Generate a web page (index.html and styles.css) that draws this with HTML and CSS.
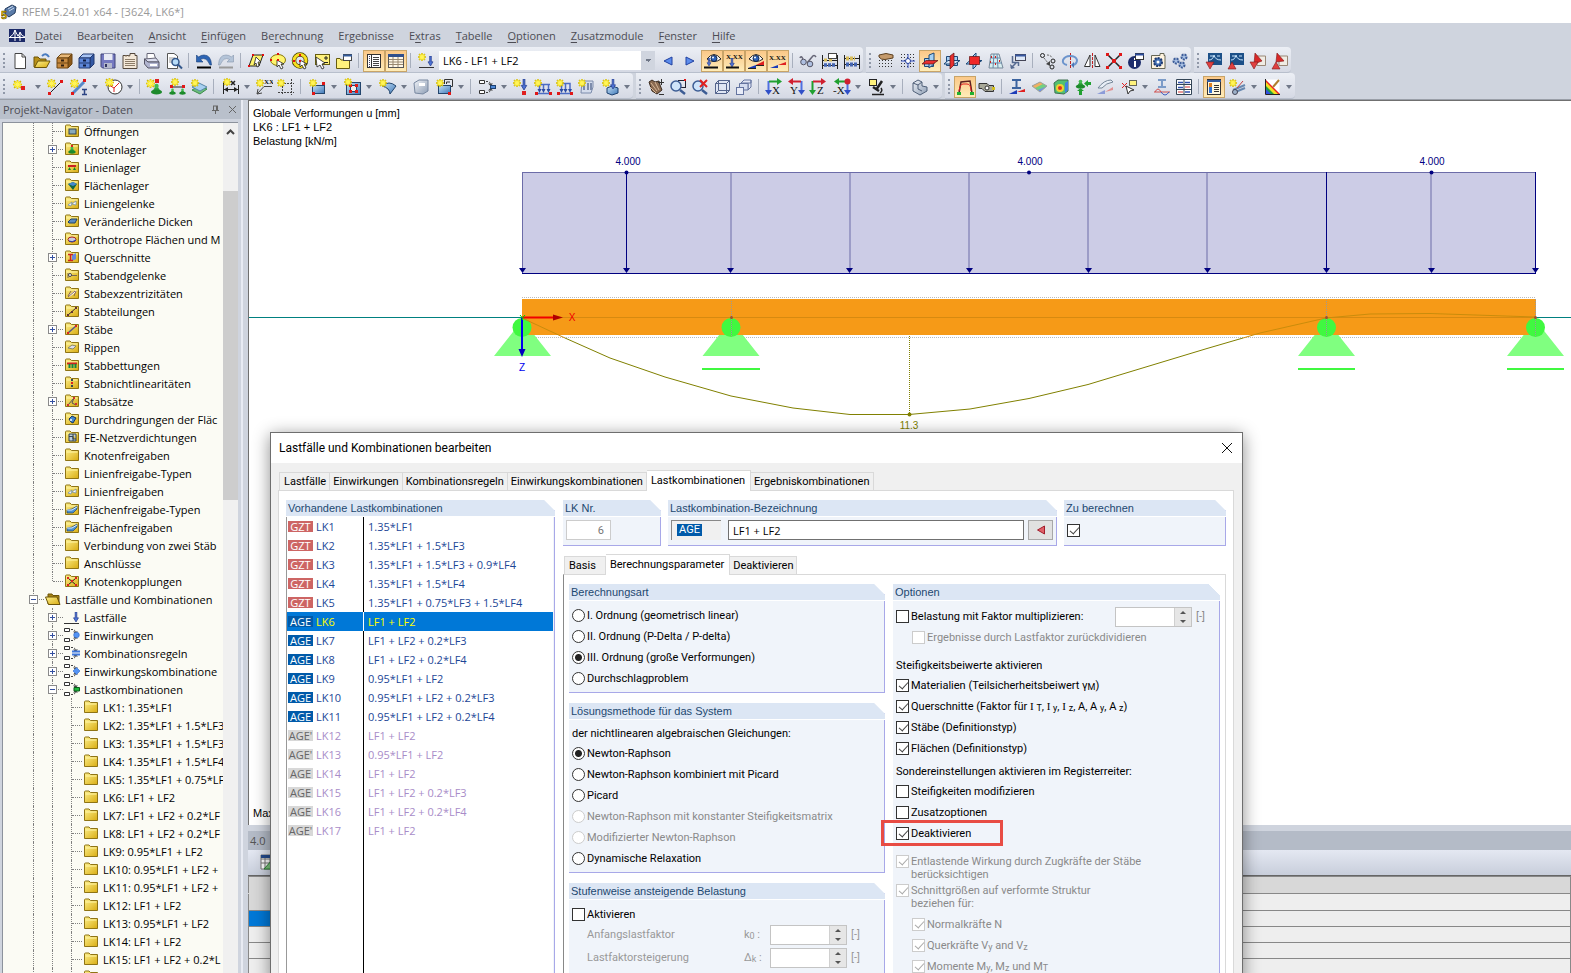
FILE: index.html
```html
<!DOCTYPE html>
<html lang="de">
<head>
<meta charset="utf-8">
<title>RFEM 5.24.01 x64 - [3624, LK6*]</title>
<link rel="stylesheet" href="styles.css">
</head>
<body>
<svg class="defs" aria-hidden="true">
  <defs>
    <linearGradient id="gy" x1="0" y1="0" x2="1" y2="1"><stop offset="0" stop-color="#fdf08c"/><stop offset="1" stop-color="#d9ac12"/></linearGradient>
    <linearGradient id="gb" x1="0" y1="0" x2="1" y2="1"><stop offset="0" stop-color="#c4e0f6"/><stop offset="1" stop-color="#3f78b8"/></linearGradient>
    <linearGradient id="gr" x1="0" y1="0" x2="1" y2="1"><stop offset="0" stop-color="#f0f3f8"/><stop offset="1" stop-color="#8d9db4"/></linearGradient>
  </defs>
  <symbol id="star" viewBox="0 0 8 8"><path d="M4 0V8M0 4H8M1 1L7 7M7 1L1 7" stroke="#c4aa00" stroke-width="1.400"/><path d="M4 .5V7.500M.5 4H7.500M1.500 1.500L6.500 6.500M6.500 1.500L1.500 6.500" stroke="#ffee20" stroke-width="1.200"/><circle cx="4" cy="4" r="2" fill="#fff45c"/></symbol>
  <symbol id="fold" viewBox="0 0 16 14"><path d="M1.500 3V2Q1.500 1 2.500 1H6L7.500 2.500H14.500V12.500H1.500Z" fill="url(#gy)" stroke="#8f7414"/><path d="M2.500 4H13.500" stroke="#fff6a8"/></symbol>
  <symbol id="comb" viewBox="0 0 16 16"><path d="M.5 1.500H5.500V4.500H.5ZM.5 11.500H5.500V14.500H.5Z" fill="#fff" stroke="#333"/><path d="M7 2.500H9Q11 3 11.500 5M7 13.500H9Q11 13 11.500 11" fill="none" stroke="#444" stroke-dasharray="2 1"/><path d="M9 4.500H14L11.500 7ZM9 11.500H14L11.500 9Z" fill="#444"/></symbol>
  <symbol id="dn" viewBox="0 0 6 12"><path d="M2 0H4V7H6L3 12L0 7H2Z" fill="#4d72d4" stroke="#20388c" stroke-width=".8"/></symbol>
  <symbol id="cone" viewBox="0 0 12 12"><path d="M6 2L10 8H2Z" fill="#2fa43c"/><ellipse cx="6" cy="9" rx="5.500" ry="2.500" fill="#1d8a2c"/><circle cx="6" cy="3" r="2.200" fill="#44bb50"/></symbol>
  <symbol id="eye" viewBox="0 0 14 10"><path d="M0 6Q7-3 14 6Q7 11 0 6Z" fill="#fff" stroke="#222"/><circle cx="7" cy="5.500" r="3" fill="#2e62b8" stroke="#14264c"/><circle cx="6" cy="4.500" r="1" fill="#fff"/></symbol>
</svg>

<header class="titlebar">
  <svg class="logo" viewBox="0 0 16 16"><path d="M4 5L11 1L15 3L14 9L8 13L4 10Z" fill="#5a7ba8" stroke="#223a5c"/><path d="M7 5L12 2M8 7L13 4" stroke="#c8d8ee"/><text x="0" y="14.500" class="five">5</text></svg>
  <span>RFEM 5.24.01 x64 - [3624, LK6*]</span>
</header>

<nav class="menubar">
  <svg class="brand" viewBox="0 0 16 13"><rect width="16" height="13" fill="#1c2a68"/><path d="M0 8.500H16M1 8Q5 6 6 1Q7 6 11 8M6 1V12M11 4V12M8 7Q11 6 11 3Q12 7 16 8" fill="none" stroke="#fff"/></svg>
  <button><u>D</u>atei</button><button>Bearbeite<u>n</u></button><button><u>A</u>nsicht</button><button><u>E</u>infügen</button><button>Be<u>r</u>echnung</button><button>Er<u>g</u>ebnisse</button><button>E<u>x</u>tras</button><button><u>T</u>abelle</button><button><u>O</u>ptionen</button><button><u>Z</u>usatzmodule</button><button><u>F</u>enster</button><button><u>H</u>ilfe</button>
</nav>

<div class="bars">
  <div class="bar">
    <button class="b" aria-label="Neu"><svg class="i" viewBox="0 0 18 18"><path d="M4 1.500H11L14.500 5V16.500H4Z" fill="#fff" stroke="#444"/><path d="M11 1.500V5H14.500" stroke="#444"/></svg></button>
    <button class="b" aria-label="Öffnen"><svg class="i" viewBox="0 0 18 18"><path d="M1 15V5H5L7 7H13V15Z" fill="#b89018" stroke="#6c5408"/><path d="M1.500 15.500L5 9H17L13.500 15.500Z" fill="url(#gy)" stroke="#6c5408"/><path d="M9 4Q13 0 16 5" stroke="#4a7cc0" stroke-width="2"/></svg></button>
    <button class="b" aria-label="Block laden"><svg class="i" viewBox="0 0 18 18"><path d="M2 6L6 2H17L13 6Z" fill="#e8b878" stroke="#6c4410"/><path d="M13 6L17 2V12L13 16Z" fill="#8c5818" stroke="#6c4410"/><path d="M2 6H13V16H2ZM2 11H13" fill="#c88a40" stroke="#6c4410"/><path d="M6 8.500H9M6 13.500H9" stroke="#302010" stroke-width="2"/></svg></button>
    <button class="b" aria-label="Block speichern"><svg class="i" viewBox="0 0 18 18"><path d="M2 6L6 2H17L13 6Z" fill="#a8c4f4" stroke="#203870"/><path d="M13 6L17 2V12L13 16Z" fill="#3458a4" stroke="#203870"/><path d="M2 6H13V16H2ZM2 11H13" fill="#5c86d8" stroke="#203870"/><path d="M6 8.500H9M6 13.500H9" stroke="#101c40" stroke-width="2"/></svg></button>
    <button class="b" aria-label="Speichern"><svg class="i" viewBox="0 0 18 18"><path d="M2 2H16V16H3.500L2 14.500Z" fill="#7478c0" stroke="#404478"/><rect x="5" y="2" width="8.500" height="6" fill="#e8eaf4"/><rect x="5" y="11" width="8" height="5" fill="#b4b8cc"/><path d="M7 12V15" stroke="#303460" stroke-width="2"/></svg></button>
    <button class="b" aria-label="Protokoll"><svg class="i" viewBox="0 0 18 18"><path d="M2 3.500H9V1.500H14V3.500H16V16.500H2Z" fill="#f4e8d8" stroke="#54483c"/><path d="M4 7.500H14M4 9.500H14M4 11.500H14M4 13.500H14M5 3V5M8 3V5" stroke="#8c7c68"/></svg></button>
    <button class="b" aria-label="Drucken"><svg class="i" viewBox="0 0 18 18"><path d="M4 8V1.500H11L13 8Z" fill="#fff" stroke="#667"/><path d="M1.500 7L5 10H16L13 6Z" fill="#dcdff0" stroke="#667"/><path d="M1.500 7V12L5 16H16V10H5Z" fill="#b0b4d0" stroke="#556"/><path d="M7 13H14" stroke="#fff" stroke-width="2"/></svg></button>
    <button class="b" aria-label="Vorschau"><svg class="i" viewBox="0 0 18 18"><path d="M2.500 1.500H9L12.500 4V16.500H2.500Z" fill="#fff" stroke="#555"/><path d="M4 6H10M4 8H8M4 10H7" stroke="#999"/><circle cx="10.500" cy="10" r="3.500" fill="#b8dcf8" stroke="#34588c" stroke-width="1.500"/><path d="M13 12.500L17 16.500" stroke="#34588c" stroke-width="2"/></svg></button>
    <i class="sep"></i>
    <button class="b" aria-label="Rückgängig"><svg class="i" viewBox="0 0 18 18"><path d="M1.500 3V10H8L5.500 7.500Q11 4 15 13H16.500Q16 3 9 3Q6 3 3.500 5Z" fill="#2c64b4" stroke="#143c78" stroke-width=".6"/><path d="M2 15.500H16" stroke="#000" stroke-width="2"/></svg></button>
    <button class="b" aria-label="Wiederherstellen"><svg class="i" viewBox="0 0 18 18"><path d="M16.500 3V10H10L12.500 7.500Q7 4 3 13H1.500Q2 3 9 3Q12 3 14.500 5Z" fill="#b4c4d8" stroke="#8496ac" stroke-width=".6"/><path d="M2 15.500H16" stroke="#999" stroke-width="2"/></svg></button>
    <i class="sep"></i>
    <button class="b" aria-label="Auswahl Rhomboid"><svg class="i" viewBox="0 0 18 18"><path d="M6 3H16L12 14H2Z" fill="#fff46c" stroke="#222"/><path d="M9 5L14 10H11L12 14L10 15L9 11L7 13Z" fill="#fff" stroke="#222" stroke-width=".8"/><path d="M5 2h2v2h-2zM15 2h2v2h-2zM1 13h2v2h-2z" fill="#e01010"/></svg></button>
    <button class="b" aria-label="Auswahl Ellipse"><svg class="i" viewBox="0 0 18 18"><ellipse cx="9" cy="8" rx="7.500" ry="5.500" fill="#fff46c" stroke="#88780c"/><path d="M8 8L8 15L10 13L12 17L14 16L12 12H15Z" fill="#fff" stroke="#222" stroke-width=".8"/><path d="M8 1h2v2h-2zM1 7h2v2h-2zM8 7h2v2h-2z" fill="#e01010"/></svg></button>
    <button class="b" aria-label="Auswahl Kreisring"><svg class="i" viewBox="0 0 18 18"><circle cx="9" cy="8.500" r="6" stroke="#443c00" stroke-width="4.500"/><circle cx="9" cy="8.500" r="6" stroke="#f8e020" stroke-width="3"/><path d="M9 8L9 15L11 13L13 17L15 16L13 12H16Z" fill="#fff" stroke="#222" stroke-width=".8"/><path d="M8 2h2v2h-2zM2 8h2v2h-2zM8 8h2v2h-2z" fill="#e01010"/></svg></button>
    <button class="b" aria-label="Auswahl Rechteck"><svg class="i" viewBox="0 0 18 18"><rect x="2.500" y="2.500" width="14" height="10" fill="#fff27c" stroke="#665c10"/><path d="M3 5L4 15L7 13L9 17L11 16L9 12L12 11Z" fill="#fff" stroke="#222" stroke-width=".8"/><path d="M13 4V8M11 6H15M11 10.500H15" stroke="#222"/></svg></button>
    <button class="b" aria-label="Fenster"><svg class="i" viewBox="0 0 18 18"><path d="M1.500 6.500H5L6 8H14.500V16.500H1.500Z" fill="#fff27c" stroke="#665c10"/><rect x="8.500" y="2.500" width="8" height="6" fill="#fff" stroke="#444"/><path d="M8 3.500H17" stroke="#345c9c" stroke-width="2"/></svg></button>
    <i class="sep"></i>
    <button class="b on" aria-label="Navigator"><svg class="i" viewBox="0 0 18 18"><rect x="2.500" y="2.500" width="13" height="13" fill="#fff" stroke="#333"/><path d="M6.500 2V16" stroke="#333"/><path d="M4.500 4V15" stroke="#446" stroke-dasharray="1 1"/><path d="M8 5.500H14M8 7.500H14M8 9.500H14M8 11.500H14M8 13.500H14" stroke="#444"/></svg></button>
    <button class="b on" aria-label="Tabellen"><svg class="i" viewBox="0 0 18 18"><rect x="1.500" y="2.500" width="15" height="13" fill="#fff8e8" stroke="#555"/><path d="M1 3.500H17" stroke="#30508c" stroke-width="3"/><path d="M2 7.500H16M2 10H16M2 12.500H16M6 5V15M11 5V15" stroke="#998870"/></svg></button>
    <i class="sep"></i>
    <button class="b" aria-label="Neue Last"><svg class="i" viewBox="0 0 18 18"><use href="#star" x="1" y="1" width="8" height="8"/><use href="#dn" x="10" y="4" width="7" height="10"/><path d="M2 15.500H17" stroke="#333"/></svg></button>
    <select class="lk" aria-label="Lastkombination"><option>LK6 - LF1 + LF2</option></select>
    <button class="b" aria-label="Vorige"><svg class="i" viewBox="0 0 18 18"><path d="M13 5V13L5 9Z" fill="#5c8cec" stroke="#2040a0"/></svg></button>
    <button class="b" aria-label="Nächste"><svg class="i" viewBox="0 0 18 18"><path d="M5 5V13L13 9Z" fill="#5c8cec" stroke="#2040a0"/></svg></button>
    <button class="b on" aria-label="Lasten zeigen"><svg class="i" viewBox="0 0 18 18"><use href="#eye" x="4" y="1" width="14" height="10"/><use href="#dn" x="3" y="6" width="6" height="8"/><path d="M1 15.500H15" stroke="#111" stroke-width="2"/></svg></button>
    <button class="b on" aria-label="Lastwerte"><svg class="i" viewBox="0 0 18 18"><text x="1" y="7" class="xt">X.XX</text><use href="#dn" x="4" y="6" width="6" height="9"/><path d="M1 15.500H14" stroke="#111" stroke-width="2"/></svg></button>
    <button class="b on" aria-label="Ergebnisse zeigen"><svg class="i" viewBox="0 0 18 18"><use href="#eye" x="2" y="1" width="14" height="10"/><path d="M1 16L9 13V16Z" fill="#1c3cb8"/><path d="M9 13L17 9V13Z" fill="#e02020"/><path d="M1 16.500H9M9 13.500H17" stroke="#222"/></svg></button>
    <button class="b on" aria-label="Ergebniswerte"><svg class="i" viewBox="0 0 18 18"><text x="0" y="8" class="xt">X.XX</text><path d="M1 16L9 13V16Z" fill="#1c3cb8"/><path d="M9 13L17 10V13Z" fill="#e02020"/></svg></button>
    <i class="sep"></i>
    <button class="b" aria-label="Sicht"><svg class="i" viewBox="0 0 18 18"><path d="M1 6Q2 3 4 7M8 11L13 5Q15 2 17 5" stroke="#667" stroke-width="1.500"/><circle cx="4.500" cy="10" r="2.800" fill="#aebfe0" stroke="#556"/><circle cx="11" cy="12" r="2.800" fill="#aebfe0" stroke="#556"/></svg></button>
    <button class="b" aria-label="Berechnung LK"><svg class="i" viewBox="0 0 18 18"><path d="M1.500 3V17M16.500 3V17M1 8.500H17M1 13.500H17" stroke="#222"/><path d="M3 8h4M8 8h4" stroke="#d8bc58" stroke-width="3" stroke-dasharray="3 1"/><path d="M3 13H15" stroke="#4464b0" stroke-width="3.500" stroke-dasharray="3 1"/><rect x="7.500" y="1.500" width="8" height="5" fill="#fff" stroke="#444"/></svg></button>
    <button class="b" aria-label="Alles berechnen"><svg class="i" viewBox="0 0 18 18"><path d="M1.500 3V17M16.500 3V17M1 6.500H17M1 12.500H17" stroke="#222"/><path d="M3 6.500H12" stroke="#d8bc58" stroke-width="4" stroke-dasharray="3 1"/><path d="M3 12.500H15" stroke="#4464b0" stroke-width="4" stroke-dasharray="3 1"/></svg></button>
  </div>
  <div class="bar">
    <button class="b" aria-label="Raster setzen"><svg class="i" viewBox="0 0 18 18"><path d="M2 8.500H17M2 11.500H17M2 14.500H17" stroke="#333" stroke-dasharray="1 2"/><path d="M2 3L9 1.500L16 3V6L8 7.500Q4 8 2 5Z" fill="#c49a6c" stroke="#5c4020"/></svg></button>
    <button class="b" aria-label="Raster"><svg class="i" viewBox="0 0 18 18"><path d="M2 2.500H17M2 5.500H17M2 14.500H17M2 8.500H17M2 11.500H17" stroke="#333" stroke-dasharray="1 2"/><path d="M9 2V16M2 9H16" stroke="#3450c0"/><circle cx="9" cy="9" r="2.500" fill="#fff" stroke="#2440a0"/></svg></button>
    <button class="b on" aria-label="Ebene XY"><svg class="i" viewBox="0 0 18 18"><path d="M3.500 6.500H12.500V14.500H3.500Z" fill="#a4d0f4" stroke="#1c4878"/><path d="M8 3L13 1V12L8 16Z" fill="#a4d0f4" stroke="#1c4878"/><path d="M1 12L5 8.500H17L12 12Z" fill="#e83030" stroke="#601010" stroke-width=".7"/></svg></button>
    <button class="b" aria-label="Ebene YZ"><svg class="i" viewBox="0 0 18 18"><path d="M3.500 4.500H14.500V13.500H3.500Z" fill="#a4d0f4" stroke="#1c4878"/><path d="M1 12L5 8.500H17L12 12Z" fill="#d4e8fa" stroke="#1c4878"/><path d="M7 4L11 1V13L7 17Z" fill="#e83030" stroke="#601010" stroke-width=".7"/></svg></button>
    <button class="b" aria-label="Ebene XZ"><svg class="i" viewBox="0 0 18 18"><path d="M1 12L5 8.500H17L12 12Z" fill="#a4d0f4" stroke="#1c4878"/><path d="M8 4L11 1V14L8 17Z" fill="#a4d0f4" stroke="#1c4878"/><path d="M4.500 4.500H14.500V12.500H4.500Z" fill="#f02828" stroke="#601010" stroke-width=".7"/></svg></button>
    <button class="b" aria-label="Netz"><svg class="i" viewBox="0 0 18 18"><path d="M4 2H12L16 16H2Z" fill="#d8eef0" stroke="#789"/><path d="M4 6H13M3 11H15M7 2L6 16M10 2L11 16" stroke="#68a"/><path d="M4 5h1M8 5h1M12 9h1M3 10h1M8 12h1" stroke="#d02020" stroke-width="2"/></svg></button>
    <button class="b" aria-label="Schnitt"><svg class="i" viewBox="0 0 18 18"><rect x="6.500" y="2.500" width="10" height="6" fill="#dde8f8" stroke="#445"/><path d="M6 3.500H17" stroke="#3858a0" stroke-width="2"/><path d="M3.500 4V10.500H9.500V14M2 16L7 11" stroke="#566a90" stroke-width="1.500"/><path d="M1 12L2 17L6 16Z" fill="#566a90"/></svg></button>
    <i class="sep"></i>
    <button class="b" aria-label="Kopieren"><svg class="i" viewBox="0 0 18 18"><circle cx="3.500" cy="3.500" r="2" stroke="#222"/><circle cx="14" cy="9" r="2" stroke="#222"/><circle cx="13" cy="15" r="2" stroke="#222"/><path d="M5 6L9 11M8 3Q12 3 13 6" stroke="#666" stroke-dasharray="2 1"/><path d="M11 14L7 12L11 9Z" fill="#444"/></svg></button>
    <button class="b" aria-label="Drehen"><svg class="i" viewBox="0 0 18 18"><path d="M9.500 1V17" stroke="#c02020" stroke-dasharray="3 1"/><path d="M6 13Q1 12 2 8Q4 4 9 4Q15 4 16 8Q16 12 12 13" stroke="#6c94cc" stroke-width="2"/><path d="M10 13L13 10V16Z" fill="#4c78b8"/></svg></button>
    <button class="b" aria-label="Spiegeln"><svg class="i" viewBox="0 0 18 18"><path d="M9.500 1V17" stroke="#c02020" stroke-dasharray="3 1"/><path d="M7 3V14.500H1.500Z" fill="#fff" stroke="#333"/><path d="M12 3V14.500H17Z" fill="#fff" stroke="#333"/></svg></button>
    <button class="b" aria-label="Trennen"><svg class="i" viewBox="0 0 18 18"><path d="M2 2L16 16M16 2L2 16" stroke="#222" stroke-width="1.500"/><path d="M1 1h3v3h-3zM14 1h3v3h-3zM1 14h3v3h-3zM14 14h3v3h-3zM7 7h4v4h-4z" fill="#e01818"/></svg></button>
    <button class="b" aria-label="Info"><svg class="i" viewBox="0 0 18 18"><circle cx="7.500" cy="10.500" r="6.500" fill="#1c2c6c"/><path d="M8 9V15M8 6V8" stroke="#fff" stroke-width="2"/><rect x="8.500" y="1.500" width="8" height="6" fill="#fff" stroke="#333"/><path d="M8 2.500H17" stroke="#2c4c9c" stroke-width="2"/></svg></button>
    <button class="b" aria-label="Einstellungen"><svg class="i" viewBox="0 0 18 18"><path d="M2.500 3.500H11V1.500H15V3.500H16V16.500H2.500Z" fill="#fff4e0" stroke="#665"/><circle cx="9" cy="10" r="4" fill="#4470b4" stroke="#1c3870" stroke-dasharray="2 1" stroke-width="2"/><circle cx="9" cy="10" r="1.500" fill="#fff"/></svg></button>
    <button class="b" aria-label="Optionen"><svg class="i" viewBox="0 0 18 18"><g stroke="#3c5c98" stroke-width="2" stroke-dasharray="2 1" fill="#a8c0e4"><circle cx="5" cy="9" r="2.500"/><circle cx="13" cy="5" r="2.500"/><circle cx="11" cy="13" r="2.500"/></g></svg></button>
  </div>
  <div class="bar">
    <button class="b" aria-label="Import"><svg class="i" viewBox="0 0 18 18"><rect x="3" y="1" width="14" height="12" fill="#1c5088"/><path d="M4 8Q8 8 9 3Q10 8 16 8M5 4h3M12 4h3" stroke="#c8e4fc"/><path d="M1 10H9L5 17Z" fill="#e04040" stroke="#801818" stroke-width=".6"/></svg></button>
    <button class="b" aria-label="Export"><svg class="i" viewBox="0 0 18 18"><rect x="3" y="1" width="14" height="12" fill="#1c5088"/><path d="M4 8Q8 8 9 3Q10 8 16 8M5 4h3M12 4h3" stroke="#c8e4fc"/><path d="M1 17H9L5 10Z" fill="#e04040" stroke="#801818" stroke-width=".6"/></svg></button>
    <button class="b" aria-label="PDF Import"><svg class="i" viewBox="0 0 18 18"><path d="M8 4H16.500V13.500H8Z" fill="#f0ece4" stroke="#987"/><path d="M6 1L13 9L5 12Z" fill="#d82828" stroke="#801818" stroke-width=".6"/><path d="M1 10H9L5 17Z" fill="#e04040" stroke="#801818" stroke-width=".6"/></svg></button>
    <button class="b" aria-label="PDF Export"><svg class="i" viewBox="0 0 18 18"><path d="M8 4H16.500V13.500H8Z" fill="#f0ece4" stroke="#987"/><path d="M6 1L13 9L5 10Z" fill="#d82828" stroke="#801818" stroke-width=".6"/><path d="M1 17H9L5 10Z" fill="#e04040" stroke="#801818" stroke-width=".6"/></svg></button>
  </div>
</div>

<div class="bars">
  <div class="bar">
    <button class="b s" aria-label="Knoten"><svg class="i" viewBox="0 0 18 18"><use href="#star" x="0" y="2" width="9" height="9"/><rect x="8" y="8" width="4" height="4" fill="#e02020"/></svg></button>
    <button class="b" aria-label="Linie"><svg class="i" viewBox="0 0 18 18"><path d="M4 15L15 4" stroke="#222"/><path d="M2 14h3v3h-3zM14 2h3v3h-3z" fill="#e01818"/><use href="#star" x="1" y="1" width="9" height="9"/></svg></button>
    <button class="b s" aria-label="Stab"><svg class="i" viewBox="0 0 18 18"><path d="M3 15L14 4" stroke="#5888c8" stroke-width="3"/><path d="M1 14h3v3h-3zM13 1h3v3h-3z" fill="#e01818"/><use href="#star" x="0" y="1" width="9" height="9"/><path d="M12 11.500H17M14.500 11V17M12 16.500H17" stroke="#2c4484" stroke-width="1.500"/></svg></button>
    <button class="b s" aria-label="Bogen"><svg class="i" viewBox="0 0 18 18"><circle cx="10" cy="9" r="7" fill="#fff" stroke="#333"/><path d="M4 7L9 10L14 5M9 10V14" stroke="#e02020"/><use href="#star" x="0" y="0" width="9" height="9"/></svg></button>
    <i class="sep"></i>
    <button class="b" aria-label="Knotenlager"><svg class="i" viewBox="0 0 18 18"><use href="#cone" x="4" y="5" width="13" height="12"/><rect x="9" y="1" width="4" height="4" fill="#e02020"/><use href="#star" x="0" y="1" width="9" height="9"/></svg></button>
    <button class="b" aria-label="Linienlager"><svg class="i" viewBox="0 0 18 18"><path d="M3 9H16" stroke="#222"/><path d="M2 7h3v3h-3zM14 7h3v3h-3z" fill="#e01818"/><use href="#cone" x="1" y="10" width="7" height="7"/><use href="#cone" x="11" y="10" width="7" height="7"/><use href="#star" x="3" y="0" width="8" height="8"/></svg></button>
    <button class="b" aria-label="Flächenlager"><svg class="i" viewBox="0 0 18 18"><path d="M2 12L9 8L17 11L10 16Z" fill="#6cbc7c" stroke="#3c8c4c"/><path d="M2 9L9 5L17 9L10 13Z" fill="#a8d0f0" stroke="#5888a8"/><use href="#star" x="1" y="1" width="8" height="8"/></svg></button>
    <i class="sep"></i>
    <button class="b s" aria-label="Bemaßung"><svg class="i" viewBox="0 0 18 18"><path d="M1.500 4V16M16.500 7V16M2 11.500H16" stroke="#222"/><path d="M2 11.500L6 9V14ZM16 11.500L12 9V14Z" fill="#222"/><use href="#star" x="1" y="0" width="8" height="8"/><path d="M9 3L13 7M13 3L9 7" stroke="#222" stroke-width="1.500"/></svg></button>
    <button class="b" aria-label="Kommentar"><svg class="i" viewBox="0 0 18 18"><path d="M2 16L9 8.500H17M2 16L3 11M2 16L7 15" stroke="#444"/><use href="#star" x="1" y="1" width="8" height="8"/><text x="9" y="6" class="xt">XX</text></svg></button>
    <button class="b" aria-label="Hilfslinien"><svg class="i" viewBox="0 0 18 18"><path d="M5.500 5V17M14.500 1V17M1 5.500H17M1 14.500H17" stroke="#444" stroke-dasharray="2 1"/><use href="#star" x="0" y="1" width="8" height="8"/></svg></button>
    <i class="sep"></i>
    <button class="b s" aria-label="Fläche"><svg class="i" viewBox="0 0 18 18"><rect x="3.500" y="7.500" width="12" height="8" fill="url(#gb)" stroke="#23456c"/><path d="M13 4h3v3h-3zM3 14h3v3h-3z" fill="#e01818"/><use href="#star" x="0" y="1" width="8" height="8"/></svg></button>
    <button class="b s" aria-label="Öffnung"><svg class="i" viewBox="0 0 18 18"><rect x="2.500" y="4.500" width="14" height="12" fill="url(#gb)" stroke="#23456c"/><rect x="6.500" y="7.500" width="6" height="6" fill="#eee" stroke="#23456c"/><path d="M5 6h3v3h-3zM11 6h3v3h-3zM5 12h3v3h-3zM11 12h3v3h-3z" fill="#e01818"/><use href="#star" x="0" y="0" width="8" height="8"/></svg></button>
    <button class="b s" aria-label="Gekrümmte Fläche"><svg class="i" viewBox="0 0 18 18"><path d="M3 8Q10 2 17 8L11 16Q11 10 3 8Z" fill="url(#gb)" stroke="#23456c"/><use href="#star" x="0" y="1" width="8" height="8"/></svg></button>
    <button class="b" aria-label="Volumen"><svg class="i" viewBox="0 0 18 18"><path d="M2 5L7 2H16V13L11 16L3 15Z" fill="url(#gr)" stroke="#7888a0"/><path d="M7 5H13V8H7Z" fill="#fff"/></svg></button>
    <button class="b s" aria-label="Quader"><svg class="i" viewBox="0 0 18 18"><path d="M8.500 6V1.500H16.500V8.500H14M10.500 6V4H14" stroke="#333"/><rect x="2.500" y="7.500" width="12" height="8" fill="url(#gb)" stroke="#23456c"/><path d="M12 14h3v3h-3z" fill="#e01818"/><use href="#star" x="0" y="1" width="8" height="8"/></svg></button>
    <i class="sep"></i>
    <button class="b s" aria-label="Kombination"><svg class="i" viewBox="0 0 18 18"><use href="#comb" x="0" y="1" width="16" height="16"/><rect x="11.500" y="7.500" width="5" height="3" fill="#4c88d8" stroke="#1c4070"/></svg></button>
    <button class="b" aria-label="Knotenlast"><svg class="i" viewBox="0 0 18 18"><use href="#dn" x="8" y="1" width="8" height="11"/><rect x="10" y="13" width="4" height="4" fill="#e02020"/><use href="#star" x="1" y="1" width="8" height="8"/></svg></button>
    <button class="b" aria-label="Stablast"><svg class="i" viewBox="0 0 18 18"><path d="M4 6.500H16M5.500 6V13M9.500 6V13M14.500 6V13M2 15.500H17" stroke="#4c6cc4" stroke-width="1.500"/><path d="M3.500 11h4L5.500 15zM7.500 11h4L9.500 15zM12.500 11h4L14.500 15z" fill="#2c4ca4"/><path d="M1 14h3v3h-3zM15 14h3v3h-3z" fill="#e01818"/><use href="#star" x="0" y="1" width="8" height="8"/></svg></button>
    <button class="b" aria-label="Linienlast"><svg class="i" viewBox="0 0 18 18"><path d="M5 5.500H14V13M5.500 6V13M9.500 6V13M2 15.500H17" stroke="#4c6cc4" stroke-width="1.500"/><path d="M3.500 11h4L5.500 15zM7.500 11h4L9.500 15zM12 11h4L14 15z" fill="#2c4ca4"/><path d="M1 14h3v3h-3zM14 14h3v3h-3z" fill="#e01818"/><use href="#star" x="0" y="1" width="8" height="8"/></svg></button>
    <button class="b" aria-label="Flächenlast"><svg class="i" viewBox="0 0 18 18"><path d="M4 3H15V9L13 15H3Z" fill="#d4dcec" stroke="#7c8cac"/><path d="M6 5V12M10 5V12M13 5V12" stroke="#7c8cac" stroke-width="2"/><use href="#star" x="0" y="1" width="8" height="8"/></svg></button>
    <button class="b s" aria-label="Volumenlast"><svg class="i" viewBox="0 0 18 18"><path d="M5 10L10 8L16 10V15L10 17L5 15Z" fill="url(#gb)" stroke="#1c4070"/><use href="#dn" x="8" y="1" width="6" height="10"/><use href="#star" x="0" y="1" width="8" height="8"/></svg></button>
  </div>
  <div class="bar">
    <button class="b" aria-label="Bewegen"><svg class="i" viewBox="0 0 18 18"><path d="M2 4L5 2L8 4L12 3L13 7L15 12L10 16L5 13Z" fill="#8a6a50" stroke="#3c2c20"/><path d="M4 5L10 13M8 4L12 12M3 9L9 15" stroke="#d8b898"/><path d="M14.500 1V7M11 4.500H17M12 16.500H17" stroke="#333"/></svg></button>
    <button class="b" aria-label="Zoom Fenster"><svg class="i" viewBox="0 0 18 18"><rect x="9.500" y="2.500" width="7" height="7" stroke="#223"/><path d="M15 1h2v2h-2z" fill="#e01818"/><circle cx="7" cy="8" r="5" fill="#cfe4fa" stroke="#3c5c94" stroke-width="1.500"/><path d="M11 12L16 16" stroke="#3c5c94" stroke-width="2.500"/></svg></button>
    <button class="b" aria-label="Zoom alles"><svg class="i" viewBox="0 0 18 18"><circle cx="7" cy="8" r="5" fill="#cfe4fa" stroke="#3c5c94" stroke-width="1.500"/><path d="M11 12L16 16" stroke="#3c5c94" stroke-width="2.500"/><path d="M9 2L16 9M16 2L9 9" stroke="#e02020" stroke-width="2"/></svg></button>
    <button class="b" aria-label="Isometrie"><svg class="i" viewBox="0 0 18 18"><path d="M2.500 5.500L5.500 2.500H16.500V12.500L13.500 15.500H2.500ZM2.500 5.500H13.500V15.500M13.500 5.500L16.500 2.500M5.500 2.500V12.500H16.500M5.500 12.500L2.500 15.500" fill="#dfe6f4" stroke="#54648c"/></svg></button>
    <button class="b" aria-label="Ebenen"><svg class="i" viewBox="0 0 18 18"><path d="M6 5H16V2H9ZM13 5V12L16 9V2" fill="#e4e8f6" stroke="#6474a0"/><path d="M4.500 5.500H13V12H4.500Z" fill="#d4dcf0" stroke="#6474a0"/><rect x="1.500" y="9.500" width="7" height="7" fill="#e8ecf8" stroke="#6474a0"/></svg></button>
    <i class="sep"></i>
    <button class="b" aria-label="Ansicht X"><svg class="i" viewBox="0 0 18 18"><path d="M3.500 3V13" stroke="#5070e0" stroke-width="2"/><path d="M4 3.500H14" stroke="#20a030" stroke-width="2"/><path d="M12 0L17 3.500L12 7Z" fill="#20a030"/><path d="M0 12H7L3.500 17Z" fill="#3050c8"/><text x="7" y="16" class="ax">X</text></svg></button>
    <button class="b" aria-label="Ansicht Y"><svg class="i" viewBox="0 0 18 18"><path d="M14.500 3V13" stroke="#5070e0" stroke-width="2"/><path d="M4 3.500H14" stroke="#d02030" stroke-width="2"/><path d="M6 0L1 3.500L6 7Z" fill="#d02030"/><path d="M11 12H18L14.500 17Z" fill="#3050c8"/><text x="3" y="16" class="ax">Y</text></svg></button>
    <button class="b" aria-label="Ansicht Z"><svg class="i" viewBox="0 0 18 18"><path d="M3.500 3V13" stroke="#20a030" stroke-width="2"/><path d="M4 3.500H14" stroke="#d02030" stroke-width="2"/><path d="M12 0L17 3.500L12 7Z" fill="#d02030"/><path d="M0 12H7L3.500 17Z" fill="#20a030"/><text x="8" y="16" class="ax">Z</text></svg></button>
    <button class="b s" aria-label="Ansicht -X"><svg class="i" viewBox="0 0 18 18"><path d="M14.500 3V13" stroke="#5070e0" stroke-width="2"/><path d="M4 3.500H13" stroke="#20a030" stroke-width="2"/><path d="M6 0L1 3.500L6 7Z" fill="#20a030"/><path d="M11 12H18L14.500 17Z" fill="#3050c8"/><circle cx="14.500" cy="3.500" r="3" fill="#d02030"/><text x="0" y="16" class="ax">-X</text></svg></button>
    <button class="b s" aria-label="Sichtbarkeit"><svg class="i" viewBox="0 0 18 18"><rect x="1.500" y="1.500" width="7" height="6" fill="#fff27c" stroke="#222"/><path d="M8 12L14 3M5 9L11 13" stroke="#222" stroke-width="2.500"/><path d="M4 16.500H16M13 10Q15 13 12 15" stroke="#222" stroke-width="1.500"/></svg></button>
    <i class="sep"></i>
    <button class="b s" aria-label="Darstellung"><svg class="i" viewBox="0 0 18 18"><path d="M2 5L7 2L11 4V8L16 9V13L9 17L2 13Z" fill="url(#gr)" stroke="#506078"/><path d="M7 7V11L11 13M7 7L2 5M7 7L11 4" stroke="#506078"/></svg></button>
  </div>
  <div class="bar">
    <button class="b on" aria-label="Ergebnisse"><svg class="i" viewBox="0 0 18 18"><path d="M3 15L5 4L14 3L16 15" stroke="#5c2020" stroke-width="1.500"/><path d="M3 13Q4 6 7 6H11Q15 6 15 13" stroke="#e02020"/><path d="M1 14h4v3h-4zM14 14h4v3h-4z" fill="#20b030"/></svg></button>
    <button class="b" aria-label="Animation"><svg class="i" viewBox="0 0 18 18"><path d="M1 5.500H9L11 7.500H15.500V13.500H7L4 10.500H1Z" fill="#a8a898" stroke="#333"/><circle cx="9" cy="10" r="2" fill="#fff" stroke="#333"/><path d="M14 9H17V12H14Z" fill="#d4c020"/></svg></button>
    <i class="sep"></i>
    <button class="b" aria-label="Querschnitt"><svg class="i" viewBox="0 0 18 18"><path d="M4 2H13M8.500 2V10M4 10H13" stroke="#3c64a0" stroke-width="2"/><path d="M1 16L9 12V16Z" fill="#1c3cb8"/><path d="M9 14L17 11V14Z" fill="#e02020"/></svg></button>
    <button class="b" aria-label="Flächenergebnisse"><svg class="i" viewBox="0 0 18 18"><path d="M2 8L10 4L17 8L10 14Z" fill="#70d080"/><path d="M2 8L10 4L13 6L5 10Z" fill="#f0b060"/><path d="M8 12L15 9L17 8L10 14Z" fill="#7090e8"/><path d="M2 8L10 4L17 8L10 14Z" stroke="#a0a0a0"/></svg></button>
    <button class="b" aria-label="Volumenergebnisse"><svg class="i" viewBox="0 0 18 18"><path d="M2 5L6 2H16V13L12 16L3 15Z" fill="#50c070" stroke="#407050"/><circle cx="8" cy="10" r="4" fill="#f0d030"/><circle cx="8" cy="10" r="2" fill="#e03020"/><path d="M13 5L16 3V12L13 15Z" fill="#4080e0"/></svg></button>
    <button class="b" aria-label="Lagerkräfte"><svg class="i" viewBox="0 0 18 18"><use href="#cone" x="1" y="1" width="11" height="10"/><path d="M5 17V13H3L6.500 10L10 13H8V17Z" fill="#20a030"/><path d="M17 4V7H14V9L10 5.500L14 2V4Z" fill="#20a030"/></svg></button>
    <button class="b" aria-label="Stabergebnisse"><svg class="i" viewBox="0 0 18 18"><path d="M2 10Q8 2 15 2L17 4Q10 5 6 10Z" fill="#e8eef6" stroke="#789"/><path d="M1 16L9 12V16Z" fill="#8c9cd8"/><path d="M9 14L17 9V12Z" fill="#e09090"/></svg></button>
    <button class="b s" aria-label="Ergebniskommentar"><svg class="i" viewBox="0 0 18 18"><path d="M2 5L7 10M7 5L2 10" stroke="#e02020"/><rect x="9.500" y="2.500" width="7" height="5" fill="#fff27c" stroke="#665"/><path d="M6 8L8 16L10 13L14 12Z" fill="#fff" stroke="#333"/></svg></button>
    <button class="b" aria-label="Verlauf"><svg class="i" viewBox="0 0 18 18"><path d="M5 2H13M9 2V9M5 9H13" stroke="#7c9cc8" stroke-width="2"/><path d="M1 14H17M2 14Q5 8 8 14" stroke="#d05050"/><path d="M8 14Q12 20 16 14" stroke="#4060c0"/></svg></button>
    <button class="b" aria-label="Ergebnistabelle"><svg class="i" viewBox="0 0 18 18"><path d="M1.500 1.500H16.500V16.500H1.500ZM2 6.500H16M2 11.500H16M9 2V16" fill="#fff" stroke="#345"/><path d="M3 4.500H8M10 4.500H15M3 9.500H8M10 14H15" stroke="#3050b0" stroke-width="1.500"/><path d="M10 9H15M3 14H8" stroke="#d03030"/></svg></button>
    <i class="sep"></i>
    <button class="b on" aria-label="Panel"><svg class="i" viewBox="0 0 18 18"><rect x="2.500" y="1.500" width="13" height="15" fill="#fff8e0" stroke="#333"/><path d="M2 3H16" stroke="#345ca0" stroke-width="2"/><path d="M5.500 5V15" stroke="#e08020" stroke-width="3"/><path d="M5.500 9V15" stroke="#3070d0" stroke-width="3"/><path d="M9 7.500H14M9 9.500H14M9 11.500H14M9 13.500H14" stroke="#333"/></svg></button>
    <button class="b s" aria-label="Neu zeichnen"><svg class="i" viewBox="0 0 18 18"><path d="M4 12L16 7M4 15L16 10" stroke="#6888b0" stroke-width="2"/><path d="M8 10L14 3" stroke="#c04040"/><circle cx="6" cy="14" r="2.500" fill="#9cb0c8" stroke="#445"/><use href="#star" x="0" y="1" width="8" height="8"/></svg></button>
    <button class="b s" aria-label="Farben"><svg class="i" viewBox="0 0 18 18"><rect x="1.500" y="1.500" width="14" height="15" fill="#fff"/><path d="M2 2L16 16H2Z" fill="#f02020"/><path d="M2 4L14 16H2Z" fill="#f0e020"/><path d="M2 8L10 16H2Z" fill="#20a040"/><path d="M2 11L7 16H2Z" fill="#3050e0"/><path d="M1.500 1V16.500H16" stroke="#222"/><path d="M9 9L15 2" stroke="#b08030" stroke-width="2"/></svg></button>
  </div>
</div>

<main class="work">
  <aside class="nav">
    <div class="navhead"><span>Projekt-Navigator - Daten</span>
      <button class="hb" aria-label="Anheften"><svg viewBox="0 0 9 9"><path d="M2.500 1V5.500M6.500 1V5.500M5.500 1V5.500M1 5.500H8M2 1H7M4.500 6V9" stroke="#666" fill="none"/></svg></button>
      <button class="hb" aria-label="Schließen"><svg viewBox="0 0 9 9"><path d="M1 1L8 8M8 1L1 8" stroke="#666" fill="none"/></svg></button>
    </div>
    <div class="navbox">
      <ul class="tree">
        <li><i class="v"></i><i class="t"></i><svg class="f" viewBox="0 0 16 14"><use href="#fold"/><rect x="5" y="5" width="7" height="5" fill="#8ab" stroke="#345"/></svg>Öffnungen</li>
        <li><i class="v"></i><i class="t"><button class="p" aria-label="Aufklappen"></button></i><svg class="f" viewBox="0 0 16 14"><use href="#fold"/><use href="#cone" x="4" y="4" width="8" height="8"/><path d="M7 3h2v2h-2z" fill="#d22"/></svg>Knotenlager</li>
        <li><i class="v"></i><i class="t"></i><svg class="f" viewBox="0 0 16 14"><use href="#fold"/><path d="M4 6H12" stroke="#c22" stroke-width="2"/><path d="M4 10L5.500 7L7 10ZM9 10L10.500 7L12 10Z" fill="#182"/></svg>Linienlager</li>
        <li><i class="v"></i><i class="t"></i><svg class="f" viewBox="0 0 16 14"><use href="#fold"/><path d="M4 6L9 4L13 6L9 12Z" fill="#164"/><path d="M4 6L9 4L13 6L9 8Z" fill="#48c"/></svg>Flächenlager</li>
        <li><i class="v"></i><i class="t"></i><svg class="f" viewBox="0 0 16 14"><use href="#fold"/><path d="M4 9L8 6L7 10ZM8 8L12 5L12 9Z" fill="#fff" stroke="#68a" stroke-width=".7"/></svg>Liniengelenke</li>
        <li><i class="v"></i><i class="t"></i><svg class="f" viewBox="0 0 16 14"><use href="#fold"/><path d="M4 8L7 5H13L11 9H5Z" fill="#5a8ac0" stroke="#246"/></svg>Veränderliche Dicken</li>
        <li><i class="v"></i><i class="t"></i><svg class="f" viewBox="0 0 16 14"><use href="#fold"/><ellipse cx="8" cy="7.500" rx="4" ry="2.500" fill="#ccd" stroke="#a22"/><path d="M5 9Q8 11 12 8" stroke="#24a" fill="none"/></svg>Orthotrope Flächen und M</li>
        <li><i class="v"></i><i class="t"><button class="p" aria-label="Aufklappen"></button></i><svg class="f" viewBox="0 0 16 14"><use href="#fold"/><path d="M8 5L12 3V9L8 11Z" fill="#68d"/><path d="M4 4.500H9M6.500 4V11M4 10.500H9" stroke="#c22" stroke-width="1.500"/></svg>Querschnitte</li>
        <li><i class="v"></i><i class="t"></i><svg class="f" viewBox="0 0 16 14"><use href="#fold"/><path d="M4 5V10M6 7.500H13" stroke="#765"/><circle cx="6" cy="7" r="1.500" fill="#fff" stroke="#444"/></svg>Stabendgelenke</li>
        <li><i class="v"></i><i class="t"></i><svg class="f" viewBox="0 0 16 14"><use href="#fold"/><path d="M5 10L12 5" stroke="#fff" stroke-width="2"/><path d="M4 10L7 5M10 10L12 5M4 11L11 5" stroke="#865"/></svg>Stabexzentrizitäten</li>
        <li><i class="v"></i><i class="t"></i><svg class="f" viewBox="0 0 16 14"><use href="#fold"/><path d="M4 11L12 4" stroke="#333"/><path d="M3 10h2v2h-2zM7 7h2v2h-2zM11 3h2v2h-2z" fill="#633"/></svg>Stabteilungen</li>
        <li><i class="v"></i><i class="t"><button class="p" aria-label="Aufklappen"></button></i><svg class="f" viewBox="0 0 16 14"><use href="#fold"/><path d="M4 11L12 4" stroke="#558" stroke-width="1.500"/><path d="M3 10h2v2h-2zM11 3h2v2h-2z" fill="#d22"/></svg>Stäbe</li>
        <li><i class="v"></i><i class="t"></i><svg class="f" viewBox="0 0 16 14"><use href="#fold"/><path d="M4 8L8 5L12 6L9 9Z" fill="#dde" stroke="#886"/></svg>Rippen</li>
        <li><i class="v"></i><i class="t"></i><svg class="f" viewBox="0 0 16 14"><use href="#fold"/><path d="M3 5.500H13" stroke="#c22" stroke-width="2"/><path d="M5.500 6V10M8.500 6V10M11.500 6V10" stroke="#184" stroke-width="2"/></svg>Stabbettungen</li>
        <li><i class="v"></i><i class="t"></i><svg class="f" viewBox="0 0 16 14"><use href="#fold"/><path d="M8 3V12" stroke="#345" stroke-width="2" stroke-dasharray="2 1"/><path d="M7 6h2v2h-2z" fill="#d22"/></svg>Stabnichtlinearitäten</li>
        <li><i class="v"></i><i class="t"><button class="p" aria-label="Aufklappen"></button></i><svg class="f" viewBox="0 0 16 14"><use href="#fold"/><path d="M4 11L10 4L8 9L12 11" stroke="#555" fill="none"/><path d="M3 10h2v2h-2zM9 3h2v2h-2zM11 9h2v2h-2z" fill="#c33"/></svg>Stabsätze</li>
        <li><i class="v"></i><i class="t"></i><svg class="f" viewBox="0 0 16 14"><use href="#fold"/><path d="M5 7L8 4L12 6L9 11L7 10Z" fill="#48c" stroke="#136"/><circle cx="7" cy="8" r="1" fill="#fff"/></svg>Durchdringungen der Fläc</li>
        <li><i class="v"></i><i class="t"></i><svg class="f" viewBox="0 0 16 14"><use href="#fold"/><path d="M5 4H12V11H5ZM5 6.500H9V11M9 4V9H12" fill="#bcd" stroke="#345"/></svg>FE-Netzverdichtungen</li>
        <li><i class="v"></i><i class="t"></i><svg class="f" viewBox="0 0 16 14"><use href="#fold"/></svg>Knotenfreigaben</li>
        <li><i class="v"></i><i class="t"></i><svg class="f" viewBox="0 0 16 14"><use href="#fold"/></svg>Linienfreigabe-Typen</li>
        <li><i class="v"></i><i class="t"></i><svg class="f" viewBox="0 0 16 14"><use href="#fold"/><path d="M4 9L8 6L7 10ZM8 8L12 5L12 9Z" fill="#fff" stroke="#68a" stroke-width=".7"/></svg>Linienfreigaben</li>
        <li><i class="v"></i><i class="t"></i><svg class="f" viewBox="0 0 16 14"><use href="#fold"/><path d="M3 8L8 7L13 4V7L9 11L3 11Z" fill="#4a90d0" stroke="#246" stroke-width=".7"/><path d="M3 8L8 8L13 5" stroke="#def" fill="none"/></svg>Flächenfreigabe-Typen</li>
        <li><i class="v"></i><i class="t"></i><svg class="f" viewBox="0 0 16 14"><use href="#fold"/><path d="M3 8L8 7L13 4V7L9 11L3 11Z" fill="#4a90d0" stroke="#246" stroke-width=".7"/><path d="M3 8L8 8L13 5" stroke="#def" fill="none"/></svg>Flächenfreigaben</li>
        <li><i class="v"></i><i class="t"></i><svg class="f" viewBox="0 0 16 14"><use href="#fold"/></svg>Verbindung von zwei Stäb</li>
        <li><i class="v"></i><i class="t"></i><svg class="f" viewBox="0 0 16 14"><use href="#fold"/></svg>Anschlüsse</li>
        <li><i class="v"></i><i class="t end"></i><svg class="f" viewBox="0 0 16 14"><use href="#fold"/><path d="M4 4L12 11M12 4L4 11" stroke="#222"/><path d="M3 3h2v2h-2zM11 3h2v2h-2zM3 10h2v2h-2zM11 10h2v2h-2zM7 6h2v2h-2z" fill="#d22"/></svg>Knotenkopplungen</li>
        <li><i class="t"><button class="p m" aria-label="Zuklappen"></button></i><svg class="f" viewBox="0 0 16 14"><path d="M3 12V2H7L8 3.500H14V12Z" fill="#a88414" stroke="#6c5408"/><path d="M3.500 12.500L0.500 5H12L15 12.500Z" fill="url(#gy)" stroke="#6c5408"/></svg>Lastfälle und Kombinationen</li>
        <li><i class="v"></i><i class="t"><button class="p" aria-label="Aufklappen"></button></i><svg class="f g" viewBox="0 0 16 16"><use href="#dn" x="8" y="3" width="8" height="10"/><path d="M0 14.500H15" stroke="#333"/></svg>Lastfälle</li>
        <li><i class="v"></i><i class="t"><button class="p" aria-label="Aufklappen"></button></i><svg class="f g" viewBox="0 0 16 16"><use href="#comb"/><circle cx="12.500" cy="8" r="2.800" fill="#5494f4" stroke="#2c64c4" stroke-width=".6"/></svg>Einwirkungen</li>
        <li><i class="v"></i><i class="t"><button class="p" aria-label="Aufklappen"></button></i><svg class="f g" viewBox="0 0 16 16"><use href="#comb"/><path d="M8 6.500H16M8 9.500H16" stroke="#3f78dc" stroke-width="2"/></svg>Kombinationsregeln</li>
        <li><i class="v"></i><i class="t"><button class="p" aria-label="Aufklappen"></button></i><svg class="f g" viewBox="0 0 16 16"><use href="#comb"/><path d="M12.500 4.500L16 8L12.500 11.500L9 8Z" fill="#5494f4" stroke="#2c64c4" stroke-width=".6"/></svg>Einwirkungskombinatione</li>
        <li><i class="v"></i><i class="t"><button class="p m" aria-label="Zuklappen"></button></i><svg class="f g" viewBox="0 0 16 16"><use href="#comb"/><path d="M10 6.500H15.500V10H10Z" fill="#1fb83c" stroke="#0c5c1c"/></svg>Lastkombinationen</li>
        <li><i class="v"></i><i class="v"></i><i class="t"></i><svg class="f" viewBox="0 0 16 14"><use href="#fold"/></svg>LK1: 1.35*LF1</li>
        <li><i class="v"></i><i class="v"></i><i class="t"></i><svg class="f" viewBox="0 0 16 14"><use href="#fold"/></svg>LK2: 1.35*LF1 + 1.5*LF3</li>
        <li><i class="v"></i><i class="v"></i><i class="t"></i><svg class="f" viewBox="0 0 16 14"><use href="#fold"/></svg>LK3: 1.35*LF1 + 1.5*LF3</li>
        <li><i class="v"></i><i class="v"></i><i class="t"></i><svg class="f" viewBox="0 0 16 14"><use href="#fold"/></svg>LK4: 1.35*LF1 + 1.5*LF4</li>
        <li><i class="v"></i><i class="v"></i><i class="t"></i><svg class="f" viewBox="0 0 16 14"><use href="#fold"/></svg>LK5: 1.35*LF1 + 0.75*LF</li>
        <li><i class="v"></i><i class="v"></i><i class="t"></i><svg class="f" viewBox="0 0 16 14"><use href="#fold"/></svg>LK6: LF1 + LF2</li>
        <li><i class="v"></i><i class="v"></i><i class="t"></i><svg class="f" viewBox="0 0 16 14"><use href="#fold"/></svg>LK7: LF1 + LF2 + 0.2*LF</li>
        <li><i class="v"></i><i class="v"></i><i class="t"></i><svg class="f" viewBox="0 0 16 14"><use href="#fold"/></svg>LK8: LF1 + LF2 + 0.2*LF</li>
        <li><i class="v"></i><i class="v"></i><i class="t"></i><svg class="f" viewBox="0 0 16 14"><use href="#fold"/></svg>LK9: 0.95*LF1 + LF2</li>
        <li><i class="v"></i><i class="v"></i><i class="t"></i><svg class="f" viewBox="0 0 16 14"><use href="#fold"/></svg>LK10: 0.95*LF1 + LF2 +</li>
        <li><i class="v"></i><i class="v"></i><i class="t"></i><svg class="f" viewBox="0 0 16 14"><use href="#fold"/></svg>LK11: 0.95*LF1 + LF2 +</li>
        <li><i class="v"></i><i class="v"></i><i class="t"></i><svg class="f" viewBox="0 0 16 14"><use href="#fold"/></svg>LK12: LF1 + LF2</li>
        <li><i class="v"></i><i class="v"></i><i class="t"></i><svg class="f" viewBox="0 0 16 14"><use href="#fold"/></svg>LK13: 0.95*LF1 + LF2</li>
        <li><i class="v"></i><i class="v"></i><i class="t"></i><svg class="f" viewBox="0 0 16 14"><use href="#fold"/></svg>LK14: LF1 + LF2</li>
        <li><i class="v"></i><i class="v"></i><i class="t"></i><svg class="f" viewBox="0 0 16 14"><use href="#fold"/></svg>LK15: LF1 + LF2 + 0.2*L</li>
        <li><i class="v"></i><i class="v"></i><i class="t"></i><svg class="f" viewBox="0 0 16 14"><use href="#fold"/></svg></li>
      </ul>
      <div class="scroll"><button aria-label="Nach oben"><svg viewBox="0 0 9 6"><path d="M1 5L4.500 1.500L8 5" fill="none" stroke="#444" stroke-width="2"/></svg></button><div class="thumb"></div></div>
    </div>
  </aside>

  <section class="right">
    <div class="canvas">
      <svg class="model">
        <g transform="translate(-249 -101)">
          <g class="cap"><text x="253" y="117">Globale Verformungen u [mm]</text><text x="253" y="131">LK6 : LF1 + LF2</text><text x="253" y="145">Belastung [kN/m]</text><text x="253" y="817">Max</text></g>
          <path d="M248 317.500H522M1535 317.500H1571" stroke="#008080"/>
          <rect x="522" y="172" width="1014" height="101" fill="#cccce6"/>
          <path d="M522 172.500H1536M522.500 172V268M731 172V268M850 172V268M969 172V268M1088 172V268M1207 172V268M1431 172V268" stroke="#6c6ca8" fill="none"/>
          <path d="M1326.500 172V268M1535.500 172V273M626.500 172V268M522 273.500H1536" stroke="#000080"/>
          <g fill="#000080">
            <path d="M519 268h7l-3.500 5zM623 268h7l-3.500 5zM727 268h7l-3.500 5zM846 268h7l-3.500 5zM966 268h7l-3.500 5zM1085 268h7l-3.500 5zM1204 268h7l-3.500 5zM1323 268h7l-3.500 5zM1428 268h7l-3.500 5zM1532 268h7l-3.500 5z"/>
            <circle cx="626.500" cy="172.500" r="2"/><circle cx="1029" cy="172.500" r="2"/><circle cx="1431.500" cy="172.500" r="2"/>
            <g class="val"><text x="628" y="165">4.000</text><text x="1030" y="165">4.000</text><text x="1432" y="165">4.000</text></g>
          </g>
          <path d="M522 297.500H1536M522 337.500H1536" stroke="#bbb" stroke-dasharray="1 1"/>
          <path d="M522.500 320L551 356H494ZM731 320L759.500 356H702.500ZM1326.500 320L1355 356H1298ZM1535.500 320L1564 356H1507Z" fill="#80ff80"/>
          <rect x="522" y="299" width="1014" height="36" fill="#f69a17"/>
          <g fill="#40f840"><circle cx="522" cy="327.500" r="9.500"/><circle cx="731" cy="327.500" r="9.500"/><circle cx="1326.500" cy="327.500" r="9.500"/><circle cx="1535.500" cy="327.500" r="9.500"/></g>
          <path d="M702 369H760M1298 369H1355M1507 369H1564" stroke="#40f840" stroke-width="2"/>
          <path d="M522 317.500H1535" stroke="#d78a10"/>
          <path d="M731.500 299V337M1326.500 299V337M1535.500 299V337" stroke="#999" stroke-dasharray="1 1"/>
          <g fill="none" stroke="#808000"><path d="M565 338L610 358L665 377L731 396L793 408L850 414.500L909 414.500L970 409L1029 398.500L1088 384.500L1207 348.500L1243 338"/><path d="M522 318L565 338M1243 338L1260 333L1326 318L1370 314L1430 313.500L1535 317" stroke="#c98c0c"/><path d="M909.500 336V414" stroke-dasharray="1 1"/></g>
          <circle cx="909.500" cy="414.500" r="2" fill="#808000"/>
          <g fill="#a0522d"><circle cx="731.500" cy="317.500" r="1.500"/><circle cx="1326.500" cy="317.500" r="1.500"/><circle cx="1535.500" cy="317.500" r="1.500"/></g>
          <path d="M522 317.500H554" stroke="#f00000" stroke-width="2"/><path d="M553 314.500L563 317.500L553 320.500Z" fill="#b00000"/>
          <path d="M522 318V350" stroke="#0000f0" stroke-width="2"/><path d="M518.500 349H525.500L522 357Z" fill="#0000c0"/>
          <path d="M520 315L522.500 318L525 315M522.500 318V320" stroke="#00d000" fill="none"/>
          <g class="val"><text x="572" y="321" fill="#f00000">X</text><text x="522" y="371" fill="#0000f0">Z</text><text x="909" y="429" fill="#808000">11.3</text></g>
        </g>
      </svg>
    </div>
    <div class="tabhead">4.0</div>
    <div class="tabtools"><svg viewBox="0 0 16 16"><path d="M1 1H15V15H1ZM1 5H15M1 9H15M5 1V15M10 1V15" fill="#fff" stroke="#777"/><path d="M1 1H15V4H1Z" fill="#244a8c"/><path d="M4 15L13 5V15Z" fill="#7cc47c" stroke="#2c7c34"/></svg></div>
    <table class="grid"><tbody><tr class="h1"><td></td><td></td></tr><tr class="h2"><td></td><td></td></tr><tr class="sel"><td></td><td></td></tr><tr><td></td><td></td></tr><tr><td></td><td></td></tr><tr><td></td><td></td></tr></tbody></table>
  </section>
</main>

<section class="dialog" role="dialog" aria-label="Lastfälle und Kombinationen bearbeiten">
  <div class="dtitle"><span>Lastfälle und Kombinationen bearbeiten</span><button aria-label="Schließen"><svg viewBox="0 0 12 12"><path d="M1 1L11 11M11 1L1 11" stroke="#111" fill="none"/></svg></button></div>
  <div class="tabs"><button>Lastfälle</button><button>Einwirkungen</button><button>Kombinationsregeln</button><button>Einwirkungskombinationen</button><button class="act">Lastkombinationen</button><button>Ergebniskombinationen</button></div>
  <div class="page">
    <div class="grp list">
      <h2>Vorhandene Lastkombinationen</h2>
      <table class="lks"><tbody>
        <tr><td><b class="gzt">GZT</b>LK1</td><td>1.35*LF1</td></tr>
        <tr><td><b class="gzt">GZT</b>LK2</td><td>1.35*LF1 + 1.5*LF3</td></tr>
        <tr><td><b class="gzt">GZT</b>LK3</td><td>1.35*LF1 + 1.5*LF3 + 0.9*LF4</td></tr>
        <tr><td><b class="gzt">GZT</b>LK4</td><td>1.35*LF1 + 1.5*LF4</td></tr>
        <tr><td><b class="gzt">GZT</b>LK5</td><td>1.35*LF1 + 0.75*LF3 + 1.5*LF4</td></tr>
        <tr class="cur"><td><b class="age">AGE</b>LK6</td><td>LF1 + LF2</td></tr>
        <tr><td><b class="age">AGE</b>LK7</td><td>LF1 + LF2 + 0.2*LF3</td></tr>
        <tr><td><b class="age">AGE</b>LK8</td><td>LF1 + LF2 + 0.2*LF4</td></tr>
        <tr><td><b class="age">AGE</b>LK9</td><td>0.95*LF1 + LF2</td></tr>
        <tr><td><b class="age">AGE</b>LK10</td><td>0.95*LF1 + LF2 + 0.2*LF3</td></tr>
        <tr><td><b class="age">AGE</b>LK11</td><td>0.95*LF1 + LF2 + 0.2*LF4</td></tr>
        <tr class="off"><td><b>AGE'</b>LK12</td><td>LF1 + LF2</td></tr>
        <tr class="off"><td><b>AGE'</b>LK13</td><td>0.95*LF1 + LF2</td></tr>
        <tr class="off"><td><b>AGE</b>LK14</td><td>LF1 + LF2</td></tr>
        <tr class="off"><td><b>AGE</b>LK15</td><td>LF1 + LF2 + 0.2*LF3</td></tr>
        <tr class="off"><td><b>AGE</b>LK16</td><td>LF1 + LF2 + 0.2*LF4</td></tr>
        <tr class="off"><td><b>AGE'</b>LK17</td><td>LF1 + LF2</td></tr>
        <tr class="rest"><td></td><td></td></tr>
      </tbody></table>
    </div>
    <div class="detail">
      <div class="top">
        <div class="grp nr"><h2><label for="nr">LK Nr.</label></h2><div class="line"><input id="nr" class="num" value="6" disabled></div></div>
        <div class="grp name"><h2><label for="bez">Lastkombination-Bezeichnung</label></h2><div class="line"><span class="kind"><b class="age">AGE</b></span><input id="bez" class="txt" value="LF1 + LF2"><button class="red" aria-label="Übernehmen"><svg viewBox="0 0 10 10"><path d="M8.500 1V9L1.500 5Z" fill="#e06068" stroke="#a01c2c"/></svg></button></div></div>
        <div class="grp calc"><h2><label for="zu">Zu berechnen</label></h2><div class="line"><input id="zu" type="checkbox" checked></div></div>
      </div>
      <div class="tabs inner"><button class="wide">Basis</button><button class="act">Berechnungsparameter</button><button>Deaktivieren</button></div>
      <div class="params">
        <div class="col">
          <div class="grp"><h2>Berechnungsart</h2><div class="body">
            <label class="r"><input type="radio" name="art">I. Ordnung (geometrisch linear)</label>
            <label class="r"><input type="radio" name="art">II. Ordnung (P-Delta / P-delta)</label>
            <label class="r"><input type="radio" name="art" checked>III. Ordnung (große Verformungen)</label>
            <label class="r"><input type="radio" name="art">Durchschlagproblem</label>
          </div></div>
          <div class="grp"><h2>Lösungsmethode für das System</h2><div class="body">
            <p>der nichtlinearen algebraischen Gleichungen:</p>
            <label class="r"><input type="radio" name="meth" checked>Newton-Raphson</label>
            <label class="r"><input type="radio" name="meth">Newton-Raphson kombiniert mit Picard</label>
            <label class="r"><input type="radio" name="meth">Picard</label>
            <label class="r dis"><input type="radio" name="meth" disabled>Newton-Raphson mit konstanter Steifigkeitsmatrix</label>
            <label class="r dis"><input type="radio" name="meth" disabled>Modifizierter Newton-Raphson</label>
            <label class="r"><input type="radio" name="meth">Dynamische Relaxation</label>
          </div></div>
          <div class="grp"><h2>Stufenweise ansteigende Belastung</h2><div class="body">
            <label class="r"><input type="checkbox">Aktivieren</label>
            <div class="f2"><label for="k0">Anfangslastfaktor</label><span class="sy">k<small>0</small> :</span><span class="spin"><input id="k0" disabled><i></i></span><span>[-]</span></div>
            <div class="f2"><label for="dk">Lastfaktorsteigerung</label><span class="sy">Δ<small>k</small> :</span><span class="spin"><input id="dk" disabled><i></i></span><span>[-]</span></div>
          </div></div>
        </div>
        <div class="grp opts"><h2>Optionen</h2><div class="body">
          <div class="mul"><label class="r"><input type="checkbox">Belastung mit Faktor multiplizieren:</label><span class="spin"><input aria-label="Faktor" disabled><i></i></span><span class="unit">[-]</span></div>
          <label class="r dis in sm"><input type="checkbox" disabled>Ergebnisse durch Lastfaktor zurückdividieren</label>
          <p class="sub1">Steifigkeitsbeiwerte aktivieren</p>
          <label class="r"><input type="checkbox" checked><span>Materialien (Teilsicherheitsbeiwert γ<small>M</small>)</span></label>
          <label class="r"><input type="checkbox" checked><span>Querschnitte (Faktor für <span class="sf">I</span> <small>T</small>, <span class="sf">I</span> <small>y</small>, <span class="sf">I</span> <small>z</small>, A, A <small>y</small>, A <small>z</small>)</span></label>
          <label class="r"><input type="checkbox" checked>Stäbe (Definitionstyp)</label>
          <label class="r"><input type="checkbox" checked>Flächen (Definitionstyp)</label>
          <p class="sub2">Sondereinstellungen aktivieren im Registerreiter:</p>
          <label class="r"><input type="checkbox">Steifigkeiten modifizieren</label>
          <label class="r"><input type="checkbox">Zusatzoptionen</label>
          <label class="r mark"><input type="checkbox" checked>Deaktivieren</label>
          <label class="r two dis"><input type="checkbox" checked disabled><span>Entlastende Wirkung durch Zugkräfte der Stäbe<br>berücksichtigen</span></label>
          <label class="r two nxt dis"><input type="checkbox" checked disabled><span>Schnittgrößen auf verformte Struktur<br>beziehen für:</span></label>
          <div class="deep">
            <label class="r dis in"><input type="checkbox" checked disabled>Normalkräfte N</label>
            <label class="r dis in"><input type="checkbox" checked disabled><span>Querkräfte V<small>y</small> and V<small>z</small></span></label>
            <label class="r dis in"><input type="checkbox" checked disabled><span>Momente M<small>y</small>, M<small>z</small> und M<small>T</small></span></label>
          </div>
        </div></div>
      </div>
    </div>
  </div>
</section>
</body>
</html>
```
FILE: styles.css
```css
*,*::before,*::after{box-sizing:border-box}
html,body{height:100%}
body{margin:0;display:flex;flex-direction:column;overflow:hidden;position:relative;background:#cfd4de;color:#000;font:11px "Open Sans","Noto Sans",sans-serif}
button,input,select{font:inherit;color:inherit}
button{border:0;background:none;padding:0;margin:0}
i{font-style:normal}
.defs{position:absolute;width:0;height:0}

.titlebar{flex:none;height:23px;background:#fff;color:#999;display:flex;align-items:center;gap:5px;padding-left:1px}
.logo{width:16px;height:16px}
.five{font:bold 11px "Liberation Sans",sans-serif;fill:#ffd800;stroke:#5c4800;stroke-width:.6px}

.menubar{flex:none;height:24px;display:flex;align-items:center;gap:15px;padding-left:9px;color:#4c4c54}
.brand{width:16px;height:13px;margin-right:-5px}
.menubar u{text-underline-offset:2px}

.bars{flex:none;height:26px;display:flex;gap:3px}
.bar{height:26px;display:flex;align-items:center;padding:2px 0 0 9px;border-radius:0 4px 4px 0;background:linear-gradient(#eceff5,#d5d9e4);border-bottom:1px solid #b8bfcc;position:relative}
.bar::before{content:"";position:absolute;left:3px;top:6px;height:15px;border-left:2px dotted #9098a8}
.b{flex:none;width:22px;height:22px;display:flex;align-items:center;justify-content:center;border:1px solid transparent}
.b.on{border-color:#c8a468;background:linear-gradient(#fbc888,#feecb8)}
.b.s{width:35px;justify-content:flex-start;padding-left:3px;gap:4px}
.b.s::after{content:"";border:3px solid transparent;border-top:4px solid #707888;border-bottom:0}
.i{width:18px;height:18px;fill:none;flex:none}
.sep{flex:none;width:8px;height:15px;background:linear-gradient(#a8afbd,#a8afbd) 3px 0/1px 100% no-repeat}
.xt{font:bold 7px "Liberation Serif",serif;fill:#111}
.ax{font:11px "Liberation Serif",serif;fill:#111}
.lk{width:216px;height:19px;margin:0 2px;border:0;padding:0 4px;appearance:none;background-color:#fff;background-image:linear-gradient(45deg,transparent 50%,#707888 50%),linear-gradient(135deg,#707888 50%,transparent 50%),linear-gradient(#d0d5df,#d0d5df);background-size:3px 3px,3px 3px,14px 100%;background-position:right 7px center,right 4px center,right 0 top 0;background-repeat:no-repeat}

.work{flex:1;min-height:0;display:flex;border-top:1px solid #9a9fa8}
.nav{flex:none;width:243px;display:flex;flex-direction:column;border-right:2px solid #e8ebf3}
.navhead{flex:none;height:19px;background:#b9c0cb;color:#4c4c54;display:flex;align-items:center;gap:8px;padding:0 4px 1px 3px}
.navhead span{flex:1}
.hb{width:9px;height:9px;display:flex}
.hb svg{width:9px;height:9px}
.navbox{flex:1;min-height:0;display:flex;margin:3px 3px 0 2px;background:#fbfbf4;border:1px solid #8c929c;border-width:1px 0 0 1px;overflow:hidden}
.tree{flex:1;min-width:0;margin:-1px 0 0;padding:0 0 0 21px;list-style:none;overflow:hidden}
.tree li{height:18px;display:flex;align-items:center;white-space:nowrap}
.tree li>i{flex:none;width:19px;height:18px;position:relative}
.tree li>i::before{content:"";position:absolute;left:9px;top:0;bottom:0;border-left:1px dotted #808080}
.tree li>i.end::before{bottom:9px}
.tree li>i.t::after{content:"";position:absolute;left:10px;top:9px;width:10px;border-top:1px dotted #808080}
.p{position:absolute;z-index:1;left:5px;top:5px;width:9px;height:9px;border:1px solid #8a8a8a;background:linear-gradient(#3450a0,#3450a0) center/5px 1px no-repeat,linear-gradient(#3450a0,#3450a0) center/1px 5px no-repeat,#fff}
.p.m{background:linear-gradient(#3450a0,#3450a0) center/5px 1px no-repeat,#fff}
.f{flex:none;width:16px;height:14px;margin:0 4px 0 2px}
.f.g{height:16px}
.scroll{flex:none;width:15px;background:#f0f0f0;display:flex;flex-direction:column}
.scroll button{height:18px;display:flex;align-items:center;justify-content:center}
.scroll svg{width:9px;height:6px}
.thumb{margin-top:50px;height:309px;background:#cdcdcd}

.right{flex:1;min-width:0;display:flex;flex-direction:column;margin-left:5px}
.canvas{flex:1;min-height:0;background:#fff;border:1px solid #707070;border-width:1px 0 0 1px;overflow:hidden}
.model{display:block;width:100%;height:100%}
.cap{font:11px "Liberation Sans",sans-serif}
.val{font:10px "Liberation Sans",sans-serif;text-anchor:middle}
.tabhead{flex:none;height:19px;margin-top:6px;background:#b4bbc7;color:#555;padding-left:2px;line-height:19px}
.tabtools{flex:none;height:26px;padding:4px 12px;background:linear-gradient(#e4e8f2,#c8cedb);border-bottom:1px solid #666}
.tabtools svg{width:16px;height:16px}
.grid{flex:none;width:100%;margin-bottom:-2px;border-collapse:collapse;background:#eee;border:1px solid #888}
.grid td{height:16px;padding:0;border:1px solid #888}
.grid td:first-child{width:60px}
.grid .h1 td{height:17px;background:#d8d8d8}
.grid .h2 td{height:17px}
.grid .h1 td:first-child{border-bottom-color:#d8d8d8}
.grid .h2 td:first-child{background:#d8d8d8}
.grid .sel td:first-child{background:#0078d7}

.dialog{position:absolute;left:270px;top:432px;bottom:-10px;width:973px;display:flex;flex-direction:column;background:#f0f0f0;border:1px solid #6e6e6e;box-shadow:0 3px 16px rgba(0,0,0,.45);font-family:Roboto,"Open Sans",sans-serif}
.dtitle{flex:none;height:30px;background:#fff;display:flex;align-items:center;justify-content:space-between;padding:0 9px 0 8px;font-size:12px}
.dtitle button{width:12px;height:12px;display:flex}
.tabs{flex:none;display:flex;align-items:flex-end;height:27px;padding-left:8px}
.tabs button{height:18px;padding:0 3px;border:1px solid #d9d9d9;border-width:1px 1px 0 0;background:#f0f0f0;white-space:nowrap}
.tabs button:first-child{border-left-width:1px;padding-left:4px}
.tabs .act{height:21px;margin-bottom:-1px;background:#fff;padding:0 5px 2px 4px;position:relative}
.tabs .wide{padding:0 9px 0 5px}
.page{flex:1;min-height:0;margin:0 8px 0 7px;padding:9px 7px 0 7px;display:flex;gap:8px;background:#fff;border:1px solid #d9d9d9;border-bottom:0;overflow:hidden}
.grp{background:#f0f4fa;border:1px solid #a8a8e8;border-width:0 1px 1px 0;position:relative;clip-path:polygon(0 0,calc(100% - 11px) 0,100% 11px,100% 100%,0 100%)}
.grp h2{margin:0 -1px 0 0;height:17px;padding:0 2px;background:#dce6f4;border-bottom:1px solid #fff;font:11px/16px "Liberation Sans",sans-serif;color:#1c4870}
.list{flex:none;width:269px}
.lks{width:267px;border-collapse:collapse;background:#fff;color:#1c4696;border-left:1px solid #999;font-family:"Open Sans",sans-serif}
.lks td{height:19px;padding:0 0 0 4px;white-space:nowrap}
.lks td:first-child{width:77px;padding-left:1px;border-right:1px solid #000}
.lks b{display:inline-block;width:25px;height:11px;margin-right:3px;font-weight:400;line-height:11px;text-align:center;background:#d8d8d8;color:#666}
.lks .gzt{background:#cd6564;color:#fff}
b.age,.lks .age{background:#005aa9;color:#fff}
.lks .cur{background:#0078d7;color:#ff0}
.lks .cur td:first-child{border-color:#fff}
.off{color:#a88cc8}
.lks .rest td{height:200px}
.detail{flex:1;min-width:0;display:flex;flex-direction:column}
.top{flex:none;display:flex;gap:7px}
.top .grp{height:46px}
.line{display:flex;align-items:center;padding:3px;height:26px}
.nr{width:98px}
.name{flex:1}
.calc{width:162px}
.num{width:45px;height:20px;border:1px solid #ccc;background:#fff;color:#777;text-align:right;padding:0 6px}
.kind{width:50px;height:20px;margin-right:7px;border:1px solid #888;border-width:1px 0 0 1px;padding:3px 5px;background:#f0f0f0}
.kind b{display:block;width:25px;height:12px;font-weight:400;line-height:12px;text-align:center}
.txt{flex:1;min-width:0;height:20px;border:1px solid #707070;background:#fff;padding:0 4px;font-family:"Open Sans",sans-serif}
.red{width:25px;height:20px;margin-left:4px;border:1px solid #a8a8a8;background:#e1e1e1;display:flex;align-items:center;justify-content:center}
.red svg{width:10px;height:10px}
.inner{height:28px;padding-left:1px}
.params{flex:1;min-height:0;display:flex;gap:8px;padding:9px 5px 0 5px;border:1px solid #d9d9d9;border-left-color:#888;border-bottom:0}
.col{width:316px;display:flex;flex-direction:column;gap:10px}
.body{padding:4px 3px 3px}
.opts{flex:1;min-width:0;height:420px}
.r{display:flex;align-items:center;gap:2px;height:21px;white-space:nowrap}
p{margin:0;display:flex;align-items:center;height:19px}
small{font-size:9px;position:relative;top:1px}
.sf{font-family:"Liberation Serif",serif}
input[type=checkbox],input[type=radio]{appearance:none;flex:none;width:13px;height:13px;margin:0;border:1px solid #333;background:#fff;position:relative}
input[type=radio]{border-radius:50%}
input[type=radio]:checked{background:radial-gradient(circle,#222 3px,#fff 4px)}
input[type=checkbox]:checked::after{content:"";position:absolute;left:4px;top:0;width:5px;height:9px;border:solid #444;border-width:0 1px 1px 0;transform:rotate(42deg)}
input[type=checkbox]:disabled,input[type=radio]:disabled{border-color:#ccc}
input[type=checkbox]:disabled::after{border-color:#aaa}
.dis{color:#8a8a8a}
.in{padding-left:16px}
.f2{display:flex;align-items:flex-start;height:23px;line-height:20px;color:#999;padding-left:15px}
.f2 label{width:157px}
.f2 .sy{width:26px}
.spin{width:77px;height:20px;display:flex;border:1px solid #c4c4c4;background:#fff;margin-right:4px}
.spin input{flex:1;min-width:0;border:0;background:none;padding:0}
.spin i{width:17px;background:#e6e6e6;border-left:1px solid #d0d0d0;display:flex;flex-direction:column;align-items:center;justify-content:space-around}
.spin i::before,.spin i::after{content:"";border:3px solid transparent}
.spin i::before{border-bottom:3px solid #555;border-top:0}
.spin i::after{border-top:3px solid #555;border-bottom:0}
.mul{display:flex;align-items:center;height:23px}
.mul .r{width:219px}
.unit{color:#8a8a8a}
.r.sm{height:19px}
.sub1{margin-top:9px;height:19px}
.sub2{margin-top:3px;height:19px}
.mark{position:relative}
.mark::before{content:"";position:absolute;left:-15px;top:-3px;width:122px;height:26px;border:3px solid #e84c44}
.opts{clip-path:none;border-right:0;box-shadow:inset -1px 0 #a8a8e8}
.opts h2{margin:0;background:linear-gradient(225deg,#fff 8px,#dce6f4 8px)}
.r.two{height:26px;margin-top:11px;align-items:flex-start;line-height:13px}
.r.nxt{margin-top:3px}
.deep{margin-top:4px}
```
